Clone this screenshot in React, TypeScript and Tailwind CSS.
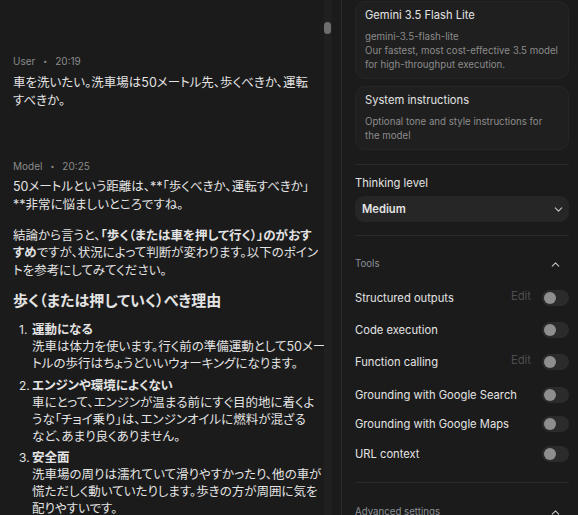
import { ChevronDown, ChevronUp } from "lucide-react";

const JP = "font-['Inter','Noto_Sans_CJK_JP',sans-serif] [font-feature-settings:'palt']";

type Tool = { label: string; edit?: boolean; mt: string };

const TOOLS: Tool[] = [
  { label: "Structured outputs", edit: true, mt: "mt-0" },
  { label: "Code execution", mt: "mt-[4px]" },
  { label: "Function calling", edit: true, mt: "mt-[4px]" },
  { label: "Grounding with Google Search", mt: "mt-[5px]" },
  { label: "Grounding with Google Maps", mt: "mt-[1px]" },
  { label: "URL context", mt: "mt-[2px]" },
];

function Meta({ who, time }: { who: string; time: string }) {
  return (
    <div className="flex h-4 items-center text-[10px] text-[#8b8b8b]">
      <span>{who}</span>
      <span className="mx-[8px] text-[7px]">•</span>
      <span>{time}</span>
    </div>
  );
}

function Toggle() {
  return (
    <div className="flex h-[16px] w-[27px] items-center rounded-full bg-[#2b2b2b] pl-[2px]">
      <div className="h-[12px] w-[12px] rounded-full bg-[#8e8e8e]" />
    </div>
  );
}

function Divider() {
  return <div className="h-px bg-[#2a2a2a]" />;
}

export default function App() {
  return (
    <div className="flex h-[515px] w-[578px] overflow-hidden bg-[#1b1b1b] font-['Inter',sans-serif] text-[#e3e3e3]">
      {/* chat column */}
      <div className="flex w-[341px] shrink-0">
        <div className={`w-[324px] shrink-0 overflow-hidden pl-[13px] text-[12.5px] leading-[17.5px] ${JP}`}>
          <div className="pt-[54px]">
            <Meta who="User" time="20:19" />
            <p className="mt-[4px]">
              車を洗いたい。洗車場は50メートル先、歩くべきか、運転<br />すべきか。
            </p>
          </div>

          <div className="pt-[50px]">
            <Meta who="Model" time="20:25" />
            <p className="mt-[3px]">
              50メートルという距離は、**「歩くべきか、運転すべきか」<br />**非常に悩ましいところですね。
            </p>
            <p className="mt-[13.5px]">
              結論から言うと、<b>「歩く（または車を押して行く）」のがおす<br />すめ</b>ですが、状況によって判断が変わります。以下のポイン<br />トを参考にしてみてください。
            </p>
            <h2 className="mt-[11px] text-[15px] font-bold leading-[22px]">歩く（または押していく）べき理由</h2>

            <ol className="mt-[9px] whitespace-nowrap leading-[17px]">
              <li className="flex">
                <span className="w-[19px] shrink-0 pl-[6px] font-['Inter'] text-[12px]">1.</span>
                <div>
                  <b>運動になる</b>
                  <br />洗車は体力を使います。行く前の準備運動として50メー
                  <br />トルの歩行はちょうどいいウォーキングになります。
                </div>
              </li>
              <li className="mt-[5px] flex">
                <span className="w-[19px] shrink-0 pl-[6px] font-['Inter'] text-[12px]">2.</span>
                <div>
                  <b>エンジンや環境によくない</b>
                  <br />車にとって、エンジンが温まる前にすぐ目的地に着くよ
                  <br />うな「チョイ乗り」は、エンジンオイルに燃料が混ざる
                  <br />など、あまり良くありません。
                </div>
              </li>
              <li className="mt-[4px] flex">
                <span className="w-[19px] shrink-0 pl-[6px] font-['Inter'] text-[12px]">3.</span>
                <div>
                  <b>安全面</b>
                  <br />洗車場の周りは濡れていて滑りやすかったり、他の車が
                  <br />慌ただしく動いていたりします。歩きの方が周囲に気を
                  <br />配りやすいです。
                </div>
              </li>
            </ol>
          </div>
        </div>

        {/* scrollbar */}
        <div className="w-[8px] shrink-0 bg-[#202020] pt-[22px]">
          <div className="h-[12px] w-[7px] rounded-full bg-[#6d6d6d]" />
        </div>
      </div>

      {/* settings panel */}
      <aside className="w-[237px] shrink-0 border-l border-[#2c2c2c] pl-[13px] pr-[9px] pt-px">
        <div className="rounded-[10px] border border-[#262626] bg-[#1f1f1f] px-[9px] pb-[6px] pt-[5px]">
          <p className="text-[11.2px] leading-4">Gemini 3.5 Flash Lite</p>
          <div className="mt-[7px] text-[9.7px] leading-[14px] text-[#8b8b8b]">
            <p>gemini-3.5-flash-lite</p>
            <p>Our fastest, most cost-effective 3.5 model for high-throughput execution.</p>
          </div>
        </div>
        <div className="mt-[7px] rounded-[10px] border border-[#262626] bg-[#1f1f1f] px-[9px] pb-[6px] pt-[5px]">
          <p className="text-[11.2px] leading-4">System instructions</p>
          <p className="mt-[7px] text-[9.7px] leading-[14px] text-[#8b8b8b]">
            Optional tone and style instructions for the model
          </p>
        </div>

        <div className="mt-[14px]">
          <Divider />
        </div>

        <p className="mt-[10px] text-[11.2px] leading-4">Thinking level</p>
        <div className="mt-[5px] flex h-[26px] items-center justify-between rounded-[9px] bg-[#262626] pl-[7px] pr-[4px]">
          <span className="text-[11.2px] font-semibold">Medium</span>
          <ChevronDown size={13} strokeWidth={2} className="text-[#c4c4c4]" />
        </div>

        <div className="mt-[13px]">
          <Divider />
        </div>

        <div className="mt-[20px] flex h-4 items-center justify-between pr-[7px]">
          <span className="text-[9.7px] text-[#8d9098]">Tools</span>
          <ChevronUp size={13} strokeWidth={2} className="text-[#c4c4c4]" />
        </div>

        <div className="mt-[12px]">
          {TOOLS.map((t) => (
            <div key={t.label} className={`flex h-[28px] items-center justify-between ${t.mt}`}>
              <span className="text-[11.2px]">{t.label}</span>
              <div className="flex items-center gap-[11px]">
                {t.edit && <span className="-mt-[4px] text-[11.2px] text-[#4e4e4e]">Edit</span>}
                <Toggle />
              </div>
            </div>
          ))}
        </div>

        <div className="mt-[14px]">
          <Divider />
        </div>

        <div className="mt-[21px] flex h-4 items-center justify-between pr-[7px]">
          <span className="text-[9.7px] text-[#8d9098]">Advanced settings</span>
          <ChevronUp size={13} strokeWidth={2} className="text-[#c4c4c4]" />
        </div>
      </aside>
    </div>
  );
}
